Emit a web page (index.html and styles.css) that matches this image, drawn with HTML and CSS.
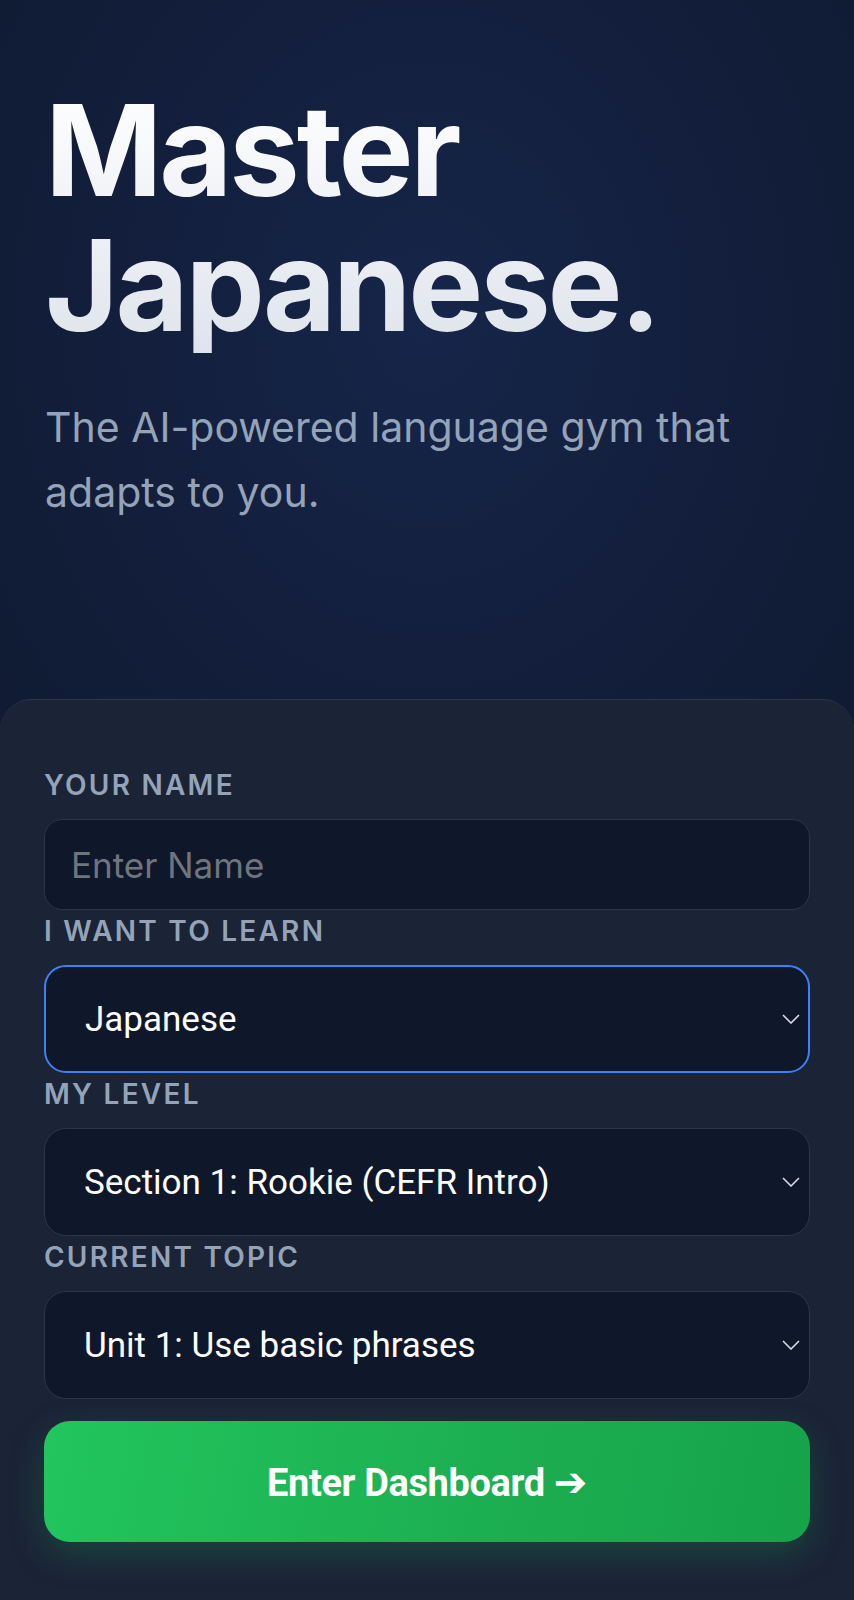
FILE: index.html
```html
<!DOCTYPE html>
<html lang="en">
<head>
    <meta charset="UTF-8">
    <meta name="viewport" content="width=device-width, initial-scale=1.0">
    <title>Master Japanese - AI Language Gym</title>
    <link rel="stylesheet" href="styles.css">
</head>
<body>
    <!-- ヒーロー -->
    <header class="hero">
        <h1 class="hero-title">Master<br>Japanese.</h1>
        <p class="hero-sub">The AI-powered language gym that adapts to you.</p>
    </header>

    <!-- 登録フォーム -->
    <main class="card">
        <div class="field">
            <label class="field-label" for="name">Your Name</label>
            <input class="text-input" id="name" type="text" placeholder="Enter Name">
        </div>

        <div class="field">
            <label class="field-label" for="lang">I want to learn</label>
            <div class="select-wrap is-focused">
                <select class="select" id="lang">
                    <option>Japanese</option>
                </select>
                <svg class="chevron" viewBox="0 0 18 10" width="18" height="10"><path d="M1 1l8 8 8-8" fill="none" stroke="currentColor" stroke-width="1.6"/></svg>
            </div>
        </div>

        <div class="field">
            <label class="field-label" for="level">My Level</label>
            <div class="select-wrap">
                <select class="select" id="level">
                    <option>Section 1: Rookie (CEFR Intro)</option>
                </select>
                <svg class="chevron" viewBox="0 0 18 10" width="18" height="10"><path d="M1 1l8 8 8-8" fill="none" stroke="currentColor" stroke-width="1.6"/></svg>
            </div>
        </div>

        <div class="field">
            <label class="field-label" for="topic">Current Topic</label>
            <div class="select-wrap">
                <select class="select" id="topic">
                    <option>Unit 1: Use basic phrases</option>
                </select>
                <svg class="chevron" viewBox="0 0 18 10" width="18" height="10"><path d="M1 1l8 8 8-8" fill="none" stroke="currentColor" stroke-width="1.6"/></svg>
            </div>
        </div>

        <button class="enter-btn" type="button">Enter Dashboard <span class="arrow">➔</span></button>
    </main>
</body>
</html>
```

FILE: styles.css
```css
/* ベース */
* {
    margin: 0;
    padding: 0;
    box-sizing: border-box;
}

html, body {
    height: 100%;
}

body {
    font-family: Inter, "Noto Sans", sans-serif;
    background: radial-gradient(ellipse 70% 45% at 50% 20%, #16254a 0%, #131f3d 45%, #101a31 100%);
    background-color: #101a31;
    color: #ffffff;
    min-height: 1600px;
    display: flex;
    flex-direction: column;
    overflow: hidden;
}

/* ヒーロー */
.hero {
    padding: 83px 45px 174px;
}

.hero-title {
    font-size: 126px;
    line-height: 135px;
    font-weight: 700;
    letter-spacing: -0.025em;
    color: #eef1f6;
    background: linear-gradient(180deg, #ffffff 0%, #dfe4ec 100%);
    -webkit-background-clip: text;
    background-clip: text;
    -webkit-text-fill-color: transparent;
}

.hero-sub {
    margin-top: 42px;
    font-size: 41px;
    line-height: 65px;
    font-weight: 400;
    color: #94a3b8;
    max-width: 760px;
}

/* フォームカード */
.card {
    flex: 1;
    background: #1b2336;
    border-top: 1px solid #2d3749;
    border-radius: 32px 32px 0 0;
    padding: 65px 44px 40px;
    display: flex;
    flex-direction: column;
    gap: 1px;
}

.field-label {
    display: block;
    font-size: 28px;
    line-height: 40px;
    font-weight: 600;
    letter-spacing: 0.08em;
    text-transform: uppercase;
    color: #94a3b8;
    margin-bottom: 14px;
}

.text-input {
    display: block;
    width: 100%;
    height: 91px;
    padding: 0 26px;
    background: #0f172a;
    border: 1.5px solid #2c3648;
    border-radius: 18px;
    font-family: Inter, "Noto Sans", sans-serif;
    font-size: 35px;
    color: #ffffff;
    outline: none;
}

.text-input::placeholder {
    color: #70757d;
}

/* セレクト */
.select-wrap {
    position: relative;
}

.select {
    display: block;
    width: 100%;
    height: 108px;
    padding: 0 60px 0 39px;
    background: #0f172a;
    border: 1.5px solid #2c3648;
    border-radius: 22px;
    font-family: Roboto, "Liberation Sans", sans-serif;
    font-size: 35px;
    color: #ffffff;
    appearance: none;
    -webkit-appearance: none;
    outline: none;
}

.select-wrap.is-focused .select {
    border: 2px solid #3b82f6;
}

.chevron {
    position: absolute;
    right: 10px;
    top: 50%;
    margin-top: -5px;
    color: #d4dbe5;
    pointer-events: none;
}

/* ボタン */
.enter-btn {
    margin-top: 21px;
    height: 121px;
    width: 100%;
    border: none;
    border-radius: 26px;
    background: linear-gradient(100deg, #22c55e 0%, #1cae51 60%, #16a34a 100%);
    box-shadow: 0 12px 36px rgba(34, 197, 94, 0.22);
    font-family: Roboto, "Liberation Sans", sans-serif;
    font-size: 38px;
    font-weight: 700;
    color: #ffffff;
    cursor: pointer;
    letter-spacing: -0.01em;
}

.enter-btn .arrow {
    font-family: "DejaVu Sans", sans-serif;
    font-size: 40px;
    font-weight: 700;
}
```
